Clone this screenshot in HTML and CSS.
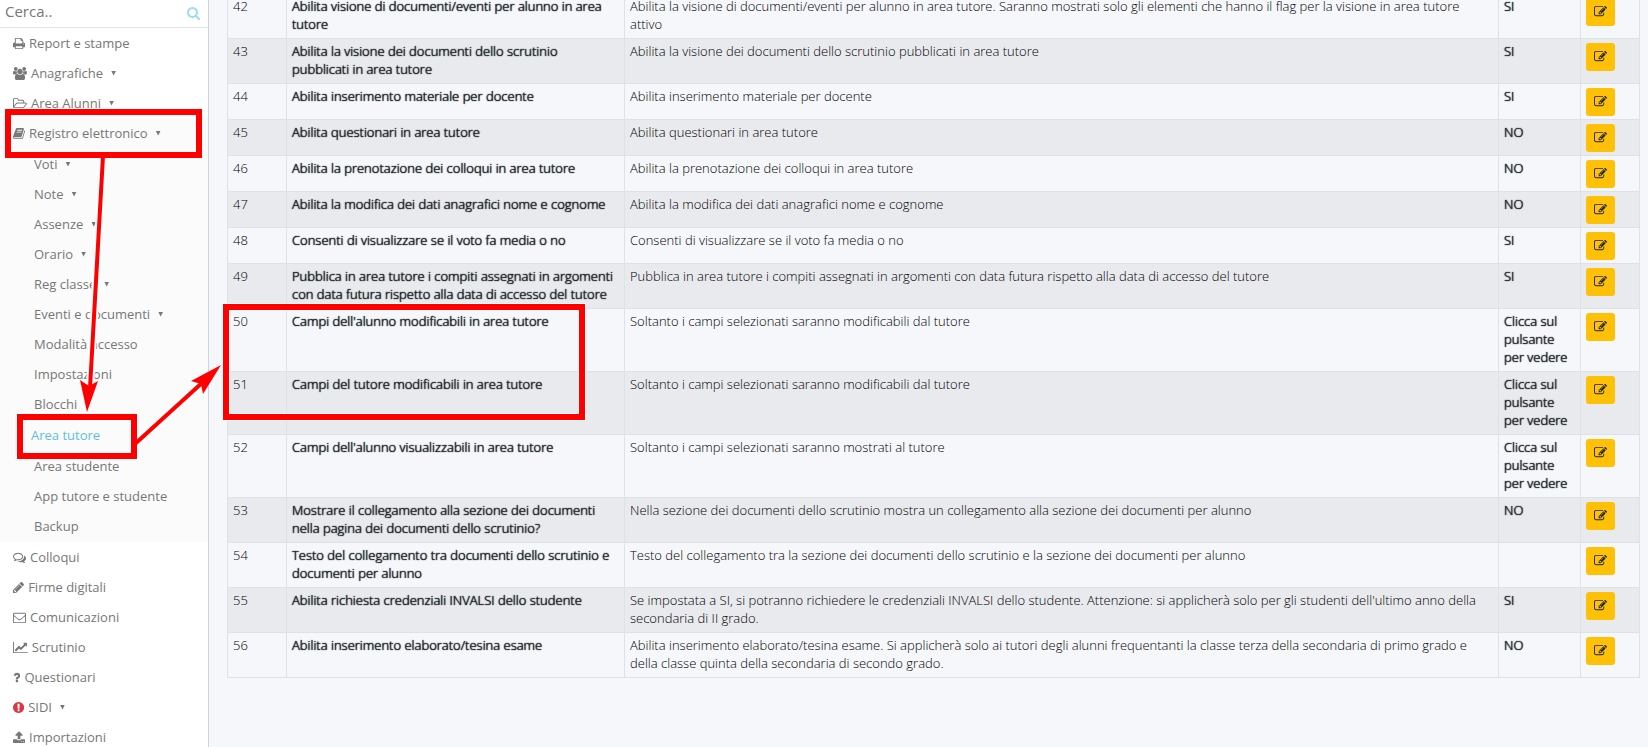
FILE: index.html
```
<!DOCTYPE html>
<html lang="it">
<head>
    <meta charset="UTF-8">
    <meta name="viewport" content="width=device-width, initial-scale=1.0">
    <title>Registro elettronico - Area tutore</title>
    <link rel="stylesheet" href="styles.css">
</head>
<body>
    <svg class="sprite" aria-hidden="true">
        <symbol id="edit" viewBox="0 0 1792 1792"><path d="M888 1184l116-116-152-152-116 116v56h96v96h56zm440-720q-16-16-33 1l-350 350q-17 17-1 33t33-1l350-350q17-17 1-33zm80 594v190q0 119-84.5 203.5t-203.5 84.5h-832q-119 0-203.5-84.5t-84.5-203.5v-832q0-119 84.5-203.5t203.5-84.5h832q63 0 117 25 15 7 18 23 3 17-9 29l-49 49q-14 14-32 8-23-6-45-6h-832q-66 0-113 47t-47 113v832q0 66 47 113t113 47h832q66 0 113-47t47-113v-126q0-13 9-22l64-64q15-15 35-7t20 29zm-96-738l288 288-672 672h-288v-288zm444 132l-92 92-288-288 92-92q28-28 68-28t68 28l152 152q28 28 28 68t-28 68z"/></symbol>
    </svg>

    <div class="layout">
        <!-- Sidebar -->
        <aside class="sidebar">
            <form class="search">
                <input type="text" placeholder="Cerca.." aria-label="Cerca">
                <button type="submit" aria-label="Avvia ricerca">
                    <svg viewBox="64 128 1664 1664"><path d="M1216 832q0-185-131.5-316.5t-316.5-131.5-316.5 131.5-131.5 316.5 131.5 316.5 316.5 131.5 316.5-131.5 131.5-316.5zm512 832q0 52-38 90t-90 38q-54 0-90-38l-343-342q-179 124-399 124-143 0-273.5-55.5t-225-150-150-225-55.5-273.5 55.5-273.5 150-225 225-150 273.5-55.5 273.5 55.5 225 150 150 225 55.5 273.5q0 220-124 399l343 343q37 37 37 90z"/></svg>
                </button>
            </form>
            <nav>
                <ul class="menu">
                    <li><a href="#"><svg class="icon" viewBox="64 0 1664 1792"><path d="M448 1536h896v-256h-896v256zm0-640h896v-384h-160q-40 0-68-28t-28-68v-160h-640v640zm1152 64q0-26-19-45t-45-19-45 19-19 45 19 45 45 19 45-19 19-45zm128 0v416q0 13-9.5 22.5t-22.5 9.5h-224v160q0 40-28 68t-68 28h-960q-40 0-68-28t-28-68v-160h-224q-13 0-22.5-9.5t-9.5-22.5v-416q0-79 56.5-135.5t135.5-56.5h64v-544q0-40 28-68t68-28h672q40 0 88 20t76 48l152 152q28 28 48 76t20 88v256h64q79 0 135.5 56.5t56.5 135.5z"/></svg>Report e stampe</a></li>
                    <li><a href="#" class="has-sub"><svg class="icon" viewBox="0 0 1920 1792"><path d="M593 896q-162 5-265 128h-134q-82 0-138-40.5t-56-118.5q0-353 124-353 6 0 43.5 21t97.5 42.5 119 21.5q67 0 133-23-5 37-5 66 0 139 81 256zm1071 637q0 120-73 189.5t-194 69.5h-874q-121 0-194-69.5t-73-189.5q0-53 3.5-103.5t14-109 26.5-108.5 43-97.5 62-81 85.5-53.5 111.5-20q10 0 43 21.5t73 48 107 48 135 21.5 135-21.5 107-48 73-48 43-21.5q61 0 111.5 20t85.5 53.5 62 81 43 97.5 26.5 108.5 14 109 3.5 103.5zm-1024-1277q0 106-75 181t-181 75-181-75-75-181 75-181 181-75 181 75 75 181zm704 384q0 159-112.5 271.5t-271.5 112.5-271.5-112.5-112.5-271.5 112.5-271.5 271.5-112.5 271.5 112.5 112.5 271.5zm576 225q0 78-56 118.5t-138 40.5h-134q-103-123-265-128 81-117 81-256 0-29-5-66 66 23 133 23 59 0 119-21.5t97.5-42.5 43.5-21q124 0 124 353zm-128-609q0 106-75 181t-181 75-181-75-75-181 75-181 181-75 181 75 75 181z"/></svg>Anagrafiche</a></li>
                    <li><a href="#" class="has-sub"><svg class="icon" viewBox="64 0 1920 1792"><path d="M1845 931q0-35-53-35h-1088q-40 0-85.5 21.5t-71.5 52.5l-294 363q-18 24-18 40 0 35 53 35h1088q40 0 86-22t71-53l294-363q18-22 18-39zm-1141-163h768v-160q0-40-28-68t-68-28h-576q-40 0-68-28t-28-68v-64q0-40-28-68t-68-28h-320q-40 0-68 28t-28 68v853l256-315q44-53 116-87.5t140-34.5zm1269 163q0 62-46 120l-295 363q-43 53-116 87.5t-140 34.5h-1088q-92 0-158-66t-66-158v-960q0-92 66-158t158-66h320q92 0 158 66t66 158v32h544q92 0 158 66t66 158v160h192q54 0 99 24.5t67 70.5q15 32 15 68z"/></svg>Area Alunni</a></li>
                    <li class="open">
                        <a href="#" class="has-sub"><svg class="icon" viewBox="64 0 1664 1792"><path d="M1703 478q40 57 18 129l-275 906q-19 64-76.5 107.5t-122.5 43.5h-923q-77 0-148.5-53.5t-99.5-131.5q-24-67-2-127 0-4 3-27t4-37q1-8-3-21.5t-3-19.5q2-11 8-21t16.5-23.5 16.5-23.5q23-38 45-91.5t30-91.5q3-10 .5-30t-.5-28q3-11 17-28t17-23q21-36 42-92t25-90q1-9-2.5-32t.5-28q4-13 22-30.5t22-22.5q19-26 42.5-84.5t27.5-96.5q1-8-3-25.5t-2-26.5q2-8 9-18t18-23 17-21q8-12 16.5-30.5t15-35 16-36 19.5-32 26.5-23.5 36-11.5 47.5 5.5l-1 3q38-9 51-9h761q74 0 114 56t18 130l-274 906q-36 119-71.5 153.5t-128.5 34.5h-869q-27 0-38 15-11 16-1 43 24 70 144 70h923q29 0 56-15.5t35-41.5l300-987q7-22 5-57 38 15 59 43zm-1064 2q-4 13 2 22.5t20 9.5h608q13 0 25.5-9.5t16.5-22.5l21-64q4-13-2-22.5t-20-9.5h-608q-13 0-25.5 9.5t-16.5 22.5zm-83 256q-4 13 2 22.5t20 9.5h608q13 0 25.5-9.5t16.5-22.5l21-64q4-13-2-22.5t-20-9.5h-608q-13 0-25.5 9.5t-16.5 22.5z"/></svg>Registro elettronico</a>
                        <ul class="submenu">
                            <li><a href="#" class="has-sub">Voti</a></li>
                            <li><a href="#" class="has-sub">Note</a></li>
                            <li><a href="#" class="has-sub">Assenze</a></li>
                            <li><a href="#" class="has-sub">Orario</a></li>
                            <li><a href="#" class="has-sub">Reg classe</a></li>
                            <li><a href="#" class="has-sub">Eventi e documenti</a></li>
                            <li><a href="#">Modalità accesso</a></li>
                            <li><a href="#">Impostazioni</a></li>
                            <li><a href="#">Blocchi</a></li>
                            <li><a href="#" class="active">Area tutore</a></li>
                            <li><a href="#">Area studente</a></li>
                            <li><a href="#">App tutore e studente</a></li>
                            <li><a href="#">Backup</a></li>
                        </ul>
                    </li>
                    <li><a href="#"><svg class="icon" viewBox="0 0 1792 1792"><path d="M704 384q-153 0-286 52t-211.5 141-78.5 191q0 82 53 158t149 132l97 56-35 84q34-20 62-39l44-31 53 10q78 14 153 14 153 0 286-52t211.5-141 78.5-191-78.5-191-211.5-141-286-52zm0-128q191 0 353.5 68.5t256.5 186.5 94 257-94 257-256.5 186.5-353.5 68.5q-86 0-176-16-124 88-278 128-36 9-86 16h-3q-11 0-20.5-8t-11.5-21q-1-3-1-6.5t.5-6.5 2-6l2.5-5 3.5-5.5 4-5 4.5-5 4-4.5q5-6 23-25t26-29.5 22.5-29 25-38.5 20.5-44q-124-72-195-177t-71-224q0-139 94-257t256.5-186.5 353.5-68.5zm822 1169q10 24 20.5 44t25 38.5 22.5 29 26 29.5 23 25q1 1 4 4.5t4.5 5 4 5 3.5 5.5l2.5 5 2 6 .5 6.5-1 6.5q-3 14-13 22t-22 7q-50-7-86-16-154-40-278-128-90 16-176 16-271 0-472-132 58 4 88 4 161 0 309-45t264-129q125-92 192-212t67-254q0-77-23-152 129 71 204 178t75 230q0 120-71 224.5t-195 176.5z"/></svg>Colloqui</a></li>
                    <li><a href="#"><svg class="icon" viewBox="128 0 1536 1792"><path d="M491 1536l91-91-235-235-91 91v107h128v128h107zm523-928q0-22-22-22-10 0-17 7l-542 542q-7 7-7 17 0 22 22 22 10 0 17-7l542-542q7-7 7-17zm-54-192l416 416-832 832h-416v-416zm683 96q0 53-37 90l-166 166-416-416 166-165q36-38 90-38 53 0 91 38l235 234q37 39 37 91z"/></svg>Firme digitali</a></li>
                    <li><a href="#"><svg class="icon" viewBox="0 0 1792 1792"><path d="M1664 1504v-768q-32 36-69 66-268 206-426 338-51 43-83 67t-86.5 48.5-102.5 24.5h-2q-48 0-102.5-24.5t-86.5-48.5-83-67q-158-132-426-338-37-30-69-66v768q0 13 9.5 22.5t22.5 9.5h1472q13 0 22.5-9.5t9.5-22.5zm0-1051v-24.5l-.5-13-3-12.5-5.5-9-9-7.5-14-2.5h-1472q-13 0-22.5 9.5t-9.5 22.5q0 168 147 284 193 152 401 317 6 5 35 29.5t46 37.5 44.5 31.5 50.5 27.5 43 9h2q20 0 43-9t50.5-27.5 44.5-31.5 46-37.5 35-29.5q208-165 401-317 54-43 100.5-115.5t46.5-131.5zm128-37v1088q0 66-47 113t-113 47h-1472q-66 0-113-47t-47-113v-1088q0-66 47-113t113-47h1472q66 0 113 47t47 113z"/></svg>Comunicazioni</a></li>
                    <li><a href="#"><svg class="icon" viewBox="0 0 2048 1792"><path d="M2048 1536v128h-2048v-1536h128v1408h1920zm-128-1248v435q0 21-19.5 29.5t-35.5-7.5l-121-121-633 633q-10 10-23 10t-23-10l-233-233-416 416-192-192 585-585q10-10 23-10t23 10l233 233 464-464-121-121q-16-16-7.5-35.5t29.5-19.5h435q14 0 23 9t9 23z"/></svg>Scrutinio</a></li>
                    <li><a href="#"><svg class="icon" viewBox="384 0 1024 1792"><path d="M1088 1256v240q0 16-12 28t-28 12h-240q-16 0-28-12t-12-28v-240q0-16 12-28t28-12h240q16 0 28 12t12 28zm316-600q0 54-15.5 101t-35 76.5-55 59.5-57.5 43.5-61 35.5q-41 23-68.5 65t-27.5 67q0 17-12 32.5t-28 15.5h-240q-15 0-25.5-18.5t-10.5-37.5v-45q0-83 65-156.5t143-108.5q59-27 84-56t25-76q0-42-46.5-74t-107.5-32q-65 0-108 29-35 25-107 115-13 16-31 16-12 0-25-8l-164-125q-13-10-15.5-25t5.5-28q160-266 464-266 80 0 161 31t146 83 106 127.5 41 158.5z"/></svg>Questionari</a></li>
                    <li><a href="#" class="has-sub"><svg class="icon alert" viewBox="128 0 1536 1792"><path d="M896 128q209 0 385.5 103t279.5 279.5 103 385.5-103 385.5-279.5 279.5-385.5 103-385.5-103-279.5-279.5-103-385.5 103-385.5 279.5-279.5 385.5-103zm128 1247v-190q0-14-9-23.5t-22-9.5h-192q-13 0-23 10t-10 23v190q0 13 10 23t23 10h192q13 0 22-9.5t9-23.5zm-2-344l18-621q0-12-10-18-10-8-24-8h-220q-14 0-24 8-10 6-10 18l17 621q0 10 10 17.5t24 7.5h185q14 0 23.5-7.5t10.5-17.5z"/></svg>SIDI</a></li>
                    <li><a href="#"><svg class="icon" viewBox="64 0 1664 1792"><path d="M1344 1472q0-26-19-45t-45-19-45 19-19 45 19 45 45 19 45-19 19-45zm256 0q0-26-19-45t-45-19-45 19-19 45 19 45 45 19 45-19 19-45zm128-224v320q0 40-28 68t-68 28h-1472q-40 0-68-28t-28-68v-320q0-40 28-68t68-28h427q21 56 70.5 92t110.5 36h256q61 0 110.5-36t70.5-92h427q40 0 68 28t28 68zm-325-648q-17 40-59 40h-256v448q0 26-19 45t-45 19h-256q-26 0-45-19t-19-45v-448h-256q-42 0-59-40-17-39 14-69l448-448q18-19 45-19t45 19l448 448q31 30 14 69z"/></svg>Importazioni</a></li>
                </ul>
            </nav>
        </aside>

        <!-- Settings table -->
        <main>
            <table>
                <colgroup>
                    <col class="col-num">
                    <col class="col-name">
                    <col>
                    <col class="col-value">
                    <col class="col-edit">
                </colgroup>
                <tbody>
                    <tr>
                        <td>42</td>
                        <th scope="row">Abilita visione di documenti/eventi per alunno in area tutore</th>
                        <td>Abilita la visione di documenti/eventi per alunno in area tutore. Saranno mostrati solo gli elementi che hanno il flag per la visione in area tutore attivo</td>
                        <td class="value">SI</td>
                        <td class="edit"><button type="button" aria-label="Modifica 42"><svg><use href="#edit"/></svg></button></td>
                    </tr>
                    <tr>
                        <td>43</td>
                        <th scope="row">Abilita la visione dei documenti dello scrutinio pubblicati in area tutore</th>
                        <td>Abilita la visione dei documenti dello scrutinio pubblicati in area tutore</td>
                        <td class="value">SI</td>
                        <td class="edit"><button type="button" aria-label="Modifica 43"><svg><use href="#edit"/></svg></button></td>
                    </tr>
                    <tr>
                        <td>44</td>
                        <th scope="row">Abilita inserimento materiale per docente</th>
                        <td>Abilita inserimento materiale per docente</td>
                        <td class="value">SI</td>
                        <td class="edit"><button type="button" aria-label="Modifica 44"><svg><use href="#edit"/></svg></button></td>
                    </tr>
                    <tr>
                        <td>45</td>
                        <th scope="row">Abilita questionari in area tutore</th>
                        <td>Abilita questionari in area tutore</td>
                        <td class="value">NO</td>
                        <td class="edit"><button type="button" aria-label="Modifica 45"><svg><use href="#edit"/></svg></button></td>
                    </tr>
                    <tr>
                        <td>46</td>
                        <th scope="row">Abilita la prenotazione dei colloqui in area tutore</th>
                        <td>Abilita la prenotazione dei colloqui in area tutore</td>
                        <td class="value">NO</td>
                        <td class="edit"><button type="button" aria-label="Modifica 46"><svg><use href="#edit"/></svg></button></td>
                    </tr>
                    <tr>
                        <td>47</td>
                        <th scope="row">Abilita la modifica dei dati anagrafici nome e cognome</th>
                        <td>Abilita la modifica dei dati anagrafici nome e cognome</td>
                        <td class="value">NO</td>
                        <td class="edit"><button type="button" aria-label="Modifica 47"><svg><use href="#edit"/></svg></button></td>
                    </tr>
                    <tr>
                        <td>48</td>
                        <th scope="row">Consenti di visualizzare se il voto fa media o no</th>
                        <td>Consenti di visualizzare se il voto fa media o no</td>
                        <td class="value">SI</td>
                        <td class="edit"><button type="button" aria-label="Modifica 48"><svg><use href="#edit"/></svg></button></td>
                    </tr>
                    <tr>
                        <td>49</td>
                        <th scope="row">Pubblica in area tutore i compiti assegnati in argomenti con data futura rispetto alla data di accesso del tutore</th>
                        <td>Pubblica in area tutore i compiti assegnati in argomenti con data futura rispetto alla data di accesso del tutore</td>
                        <td class="value">SI</td>
                        <td class="edit"><button type="button" aria-label="Modifica 49"><svg><use href="#edit"/></svg></button></td>
                    </tr>
                    <tr>
                        <td>50</td>
                        <th scope="row">Campi dell'alunno modificabili in area tutore</th>
                        <td>Soltanto i campi selezionati saranno modificabili dal tutore</td>
                        <td class="value">Clicca sul pulsante per vedere</td>
                        <td class="edit"><button type="button" aria-label="Modifica 50"><svg><use href="#edit"/></svg></button></td>
                    </tr>
                    <tr>
                        <td>51</td>
                        <th scope="row">Campi del tutore modificabili in area tutore</th>
                        <td>Soltanto i campi selezionati saranno modificabili dal tutore</td>
                        <td class="value">Clicca sul pulsante per vedere</td>
                        <td class="edit"><button type="button" aria-label="Modifica 51"><svg><use href="#edit"/></svg></button></td>
                    </tr>
                    <tr>
                        <td>52</td>
                        <th scope="row">Campi dell'alunno visualizzabili in area tutore</th>
                        <td>Soltanto i campi selezionati saranno mostrati al tutore</td>
                        <td class="value">Clicca sul pulsante per vedere</td>
                        <td class="edit"><button type="button" aria-label="Modifica 52"><svg><use href="#edit"/></svg></button></td>
                    </tr>
                    <tr>
                        <td>53</td>
                        <th scope="row">Mostrare il collegamento alla sezione dei documenti nella pagina dei documenti dello scrutinio?</th>
                        <td>Nella sezione dei documenti dello scrutinio mostra un collegamento alla sezione dei documenti per alunno</td>
                        <td class="value">NO</td>
                        <td class="edit"><button type="button" aria-label="Modifica 53"><svg><use href="#edit"/></svg></button></td>
                    </tr>
                    <tr>
                        <td>54</td>
                        <th scope="row">Testo del collegamento tra documenti dello scrutinio e documenti per alunno</th>
                        <td>Testo del collegamento tra la sezione dei documenti dello scrutinio e la sezione dei documenti per alunno</td>
                        <td class="value"></td>
                        <td class="edit"><button type="button" aria-label="Modifica 54"><svg><use href="#edit"/></svg></button></td>
                    </tr>
                    <tr>
                        <td>55</td>
                        <th scope="row">Abilita richiesta credenziali INVALSI dello studente</th>
                        <td>Se impostata a SI, si potranno richiedere le credenziali INVALSI dello studente. Attenzione: si applicherà solo per gli studenti dell'ultimo anno della secondaria di II grado.</td>
                        <td class="value">SI</td>
                        <td class="edit"><button type="button" aria-label="Modifica 55"><svg><use href="#edit"/></svg></button></td>
                    </tr>
                    <tr>
                        <td>56</td>
                        <th scope="row">Abilita inserimento elaborato/tesina esame</th>
                        <td>Abilita inserimento elaborato/tesina esame. Si applicherà solo ai tutori degli alunni frequentanti la classe terza della secondaria di primo grado e della classe quinta della secondaria di secondo grado.</td>
                        <td class="value">NO</td>
                        <td class="edit"><button type="button" aria-label="Modifica 56"><svg><use href="#edit"/></svg></button></td>
                    </tr>
                </tbody>
            </table>
        </main>
    </div>

    <!-- Highlight boxes and arrows over the page -->
    <svg class="guide" viewBox="0 0 600 470" aria-hidden="true">
        <g class="halo">
            <rect x="8" y="112" width="191" height="43"/>
            <rect x="20" y="417" width="114" height="39"/>
            <rect x="226" y="307" width="356" height="110"/>
            <path d="M103 156L90 388M136 443L203 382"/>
        </g>
        <g class="box">
            <rect x="8" y="112" width="191" height="43"/>
            <rect x="20" y="417" width="114" height="39"/>
            <rect x="226" y="307" width="356" height="110"/>
        </g>
        <path class="line" d="M103 156L90 388M136 443L203 382"/>
        <path class="head" d="M87 412L80 380L89 386L98 381ZM221 365L191 381L201 384L203 394Z"/>
    </svg>
</body>
</html>
```

FILE: styles.css
```
:root {
    --bg-color: #f5f7fb;
    --text-color: #212529;
    --cell-color: #000;
    --menu-color: #777;
    --accent-color: #5bc0de;
    --border-color: #dee2e6;
    --mark-color: #ff0000;
}

* {
    margin: 0;
    padding: 0;
    box-sizing: border-box;
}

body {
    font-family: 'Open Sans', 'Noto Sans', sans-serif;
    font-size: 13px;
    line-height: 18px;
    color: var(--text-color);
    background: var(--bg-color);
}

.sprite {
    display: none;
}

.layout {
    display: flex;
    height: 100vh;
    overflow: hidden;
}

/* Sidebar */
.sidebar {
    flex: 0 0 209px;
    background: #fff;
    border-right: 1px solid #ced4da;
    overflow: hidden;
}

.search {
    display: flex;
    align-items: center;
    height: 28px;
    padding: 0 8px 5px 5px;
    border-bottom: 1px solid #dee5e7;
}

.search input {
    flex: 1;
    min-width: 0;
    border: none;
    outline: none;
    font: inherit;
    font-size: 15px;
    color: var(--menu-color);
}

.search input::placeholder {
    color: var(--menu-color);
}

.search button {
    display: flex;
    padding-top: 4px;
    border: none;
    background: none;
    cursor: pointer;
}

.search svg {
    width: 13px;
    height: 13px;
    fill: #9fdcee;
}

.menu,
.submenu {
    list-style: none;
}

.menu a {
    display: flex;
    align-items: center;
    height: 30px;
    padding-left: 13px;
    color: var(--menu-color);
    text-decoration: none;
}

.icon {
    height: 13px;
    margin-right: 4px;
    fill: currentColor;
}

.icon.alert {
    fill: #dc3545;
}

.has-sub::after {
    content: '';
    width: 5px;
    height: 5px;
    margin-left: 8px;
    background: var(--menu-color);
    clip-path: polygon(0 0, 100% 0, 50% 100%);
}

.open {
    padding-bottom: 1px;
    background: #fbfbfb;
}

.submenu {
    padding-top: 1px;
}

.menu .submenu a {
    padding-left: 34px;
}

.menu .submenu .active {
    height: 32px;
    padding-left: 31px;
    color: var(--accent-color);
}

/* Table */
main {
    flex: 1;
    min-width: 0;
    padding: 0 8px 0 18px;
}

table {
    width: 100%;
    margin-top: -7px;
    table-layout: fixed;
    border-collapse: collapse;
}

.col-num,
.col-edit {
    width: 59px;
}

.col-name {
    width: 338px;
}

.col-value {
    width: 82px;
}

td,
th {
    padding: 3px 5px 5px;
    border: 1px solid var(--border-color);
    text-align: left;
    vertical-align: top;
    font-weight: 300;
    color: var(--cell-color);
}

th {
    padding-right: 8px;
}

tr:nth-child(even) {
    background: #e9eaee;
}

/* bold look that keeps the width of the light face */
th,
.value {
    color: var(--text-color);
    text-shadow: 0 0 1px var(--text-color), 0 0 1px var(--text-color);
}

td.edit {
    padding: 4px 5px 3px;
}

.edit button {
    display: flex;
    align-items: center;
    height: 28px;
    padding: 0 8px 2px;
    border: none;
    border-radius: 3px;
    background: #ffc107;
    cursor: pointer;
}

.edit svg {
    width: 13px;
    height: 13px;
    fill: var(--text-color);
}

/* Guide overlay */
.guide {
    position: absolute;
    top: 0;
    left: 0;
    width: 600px;
    height: 470px;
    fill: none;
    pointer-events: none;
}

.halo {
    stroke: #fff;
    stroke-width: 8px;
    stroke-linecap: round;
}

.box {
    stroke: var(--mark-color);
    stroke-width: 6px;
}

.line {
    stroke: var(--mark-color);
    stroke-width: 4px;
    stroke-linecap: round;
}

.head {
    fill: var(--mark-color);
}
```
